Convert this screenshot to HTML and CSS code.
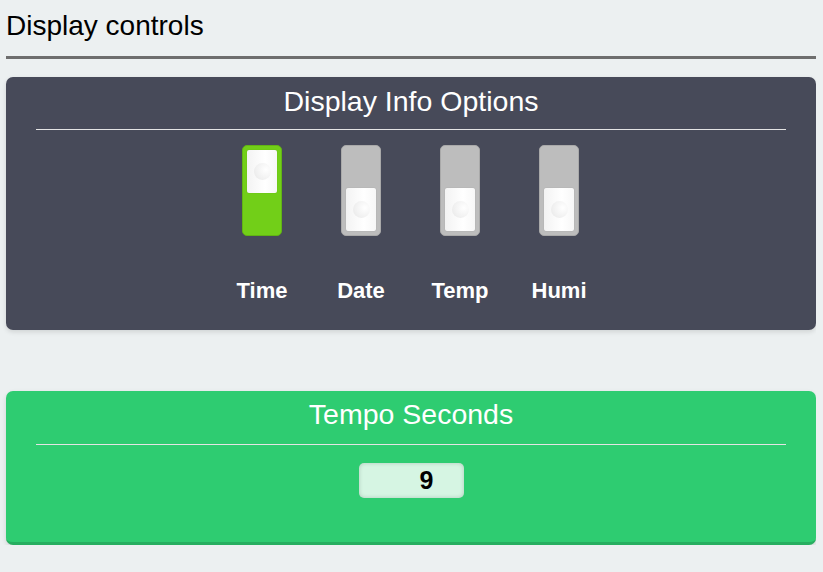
FILE: index.html
```html
<!DOCTYPE html>
<html>
<head>
<meta charset="utf-8">
<link rel="stylesheet" href="styles.css">
</head>
<body>
<h1 class="page-title">Display controls</h1>
<div class="card card-dark">
  <h2 class="card-title">Display Info Options</h2>
  <hr class="card-rule">
  <div class="toggles">
    <div class="toggle-item">
      <div class="switch on"><div class="knob"><span class="dot"></span></div></div>
      <div class="toggle-label">Time</div>
    </div>
    <div class="toggle-item">
      <div class="switch"><div class="knob"><span class="dot"></span></div></div>
      <div class="toggle-label">Date</div>
    </div>
    <div class="toggle-item">
      <div class="switch"><div class="knob"><span class="dot"></span></div></div>
      <div class="toggle-label">Temp</div>
    </div>
    <div class="toggle-item">
      <div class="switch"><div class="knob"><span class="dot"></span></div></div>
      <div class="toggle-label">Humi</div>
    </div>
  </div>
</div>
<div class="card card-green">
  <h2 class="card-title">Tempo Seconds</h2>
  <hr class="card-rule">
  <div class="field-row">
    <div class="num-field">9</div>
  </div>
</div>
</body>
</html>
```
FILE: styles.css
```css
html, body {
  margin: 0;
  padding: 0;
}
body {
  background: #ecf0f1;
  font-family: "Liberation Sans", Arial, sans-serif;
  padding: 0 0 0 6px;
  width: 810px;
}
.page-title {
  margin: 0;
  padding: 8px 0 0 0;
  height: 48px;
  font-size: 28px;
  font-weight: normal;
  color: #000;
  line-height: 36px;
  border-bottom: 3px solid #6e6e6e;
  margin-right: -20px;
}
.card {
  border-radius: 7px;
  padding: 0 30px;
  color: #fff;
  box-shadow: 0 2px 5px rgba(0,0,0,0.12);
}
.card-dark {
  background: #474a59;
  margin-top: 18px;
  height: 253px;
}
.card-green {
  background: #2ecc71;
  margin-top: 61px;
  height: 151px;
  border-bottom: 3px solid #27ae60;
}
.card-title {
  margin: 0;
  padding-top: 8px;
  font-size: 28.5px;
  font-weight: normal;
  text-align: center;
  line-height: 32px;
  height: 44px;
}
.card-green .card-title {
  padding-top: 7px;
  height: 46px;
}
.card-rule {
  margin: 0;
  border: 0;
  height: 1px;
  background: #e4e4e4;
}
.toggles {
  display: flex;
  justify-content: center;
  gap: 59px;
  padding-top: 15px;
  margin-left: -1px;
}
.toggle-item {
  display: flex;
  flex-direction: column;
  align-items: center;
  width: 40px;
}
.switch {
  box-sizing: border-box;
  width: 40px;
  height: 91px;
  border-radius: 5px;
  background: #bdbdbd;
  border: 1px solid #a9a9a9;
  padding: 4px;
  display: flex;
  flex-direction: column;
  justify-content: flex-end;
}
.switch.on {
  background: #72cf18;
  border-color: #62b414;
  justify-content: flex-start;
}
.knob {
  height: 43px;
  border-radius: 2px;
  background: linear-gradient(90deg, #f3f3f3 0%, #ffffff 60%, #f7f7f7 100%);
  box-shadow: 0 0 1px rgba(0,0,0,0.25);
  display: flex;
  align-items: center;
  justify-content: center;
}
.dot {
  width: 17px;
  height: 17px;
  border-radius: 50%;
  background: radial-gradient(circle at 70% 40%, #ffffff 0%, #f1f1f1 60%, #e6e6e6 100%);
}
.toggle-label {
  margin-top: 43px;
  font-size: 22px;
  font-weight: bold;
  white-space: nowrap;
  line-height: 24px;
}
.field-row {
  display: flex;
  justify-content: center;
  padding-top: 18px;
}
.num-field {
  box-sizing: border-box;
  width: 105px;
  height: 35px;
  border-radius: 5px;
  background: #d6f5e3;
  box-shadow: inset 0 0 4px rgba(0,0,0,0.18);
  color: #000;
  font-size: 25px;
  font-weight: bold;
  line-height: 35px;
  padding-left: 61px;
}
```
